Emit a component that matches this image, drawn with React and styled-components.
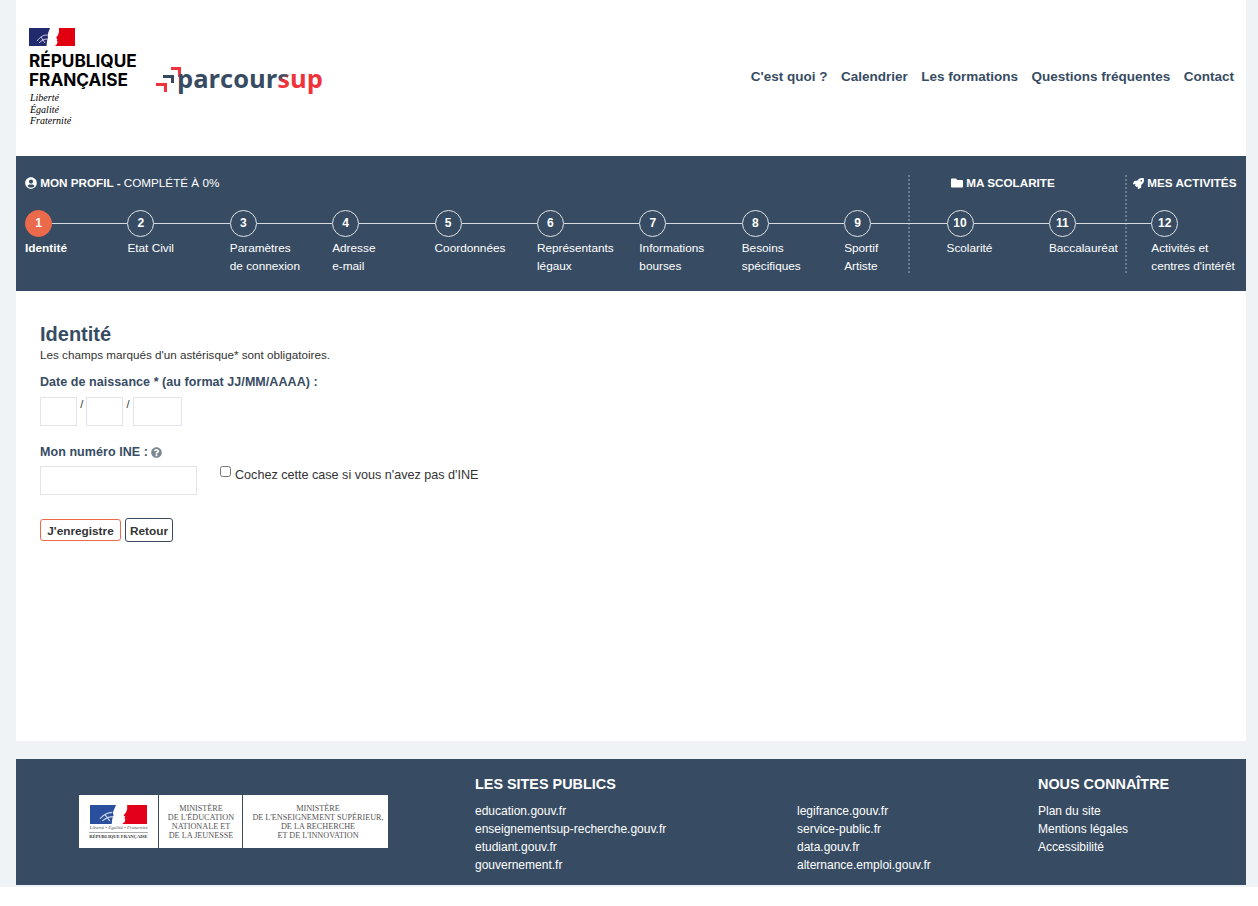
import styled, { createGlobalStyle } from 'styled-components'
import { FaUserCircle, FaFolder, FaRocket, FaQuestionCircle } from 'react-icons/fa'

const navy = '#374c62'
const coral = '#ec6a4c'

const GlobalStyle = createGlobalStyle`
  html, body {
    margin: 0;
    background: #fff;
  }
  body {
    font-family: "Liberation Sans", Arial, sans-serif;
    color: #333;
  }
`

const steps = [
  ['Identité'],
  ['Etat Civil'],
  ['Paramètres', 'de connexion'],
  ['Adresse', 'e-mail'],
  ['Coordonnées'],
  ['Représentants', 'légaux'],
  ['Informations', 'bourses'],
  ['Besoins', 'spécifiques'],
  ['Sportif', 'Artiste'],
  ['Scolarité'],
  ['Baccalauréat'],
  ['Activités et', "centres d'intérêt"],
]

const navLinks = ["C'est quoi ?", 'Calendrier', 'Les formations', 'Questions fréquentes', 'Contact']

const footerCols = [
  { title: 'LES SITES PUBLICS', width: 322, links: ['education.gouv.fr', 'enseignementsup-recherche.gouv.fr', 'etudiant.gouv.fr', 'gouvernement.fr'] },
  { title: '', width: 241, links: ['legifrance.gouv.fr', 'service-public.fr', 'data.gouv.fr', 'alternance.emploi.gouv.fr'] },
  { title: 'NOUS CONNAÎTRE', width: 208, links: ['Plan du site', 'Mentions légales', 'Accessibilité'] },
]

const FranceFlag = ({ width, height, blue, red }) => (
  <svg width={width} height={height} viewBox="0 0 46 18" preserveAspectRatio="none">
    <rect width="46" height="18" fill="#fff" />
    <path d="M0 0h21l-1.5 4-1 3 .5 3-1 3-.5 5H0z" fill={blue} />
    <path d="M30 0h16v18H26l2-2 .5-2-.7-2 .7-1-1.5-1 2-3 1-3z" fill={red} />
    <path d="M8 13c3-4 6-6 10-6M10 15c3-3 5-4 9-4M12 9l4 6" fill="none" stroke="#fff" strokeWidth="1" opacity=".75" />
  </svg>
)

const ParcoursupArrows = () => (
  <svg width="25" height="25" viewBox="0 0 25 25">
    <path d="M15 0h10v10h-3V3h-7z" fill="#f0333b" />
    <path d="M7 8h11v8h-3v-5H7z" fill="#37495f" />
    <path d="M0 16h11v9H8v-6H0z" fill="#f0333b" />
  </svg>
)

const App = () => (
  <Page>
    <GlobalStyle />
    <Header>
      <Brand>
        <Marianne>
          <FranceFlag width={46} height={18} blue="#222a6e" red="#e1000f" />
          <RepublicName>RÉPUBLIQUE<br />FRANÇAISE</RepublicName>
          <Motto>Liberté<br />Égalité<br />Fraternité</Motto>
        </Marianne>
        <Parcoursup>
          <ParcoursupArrows />
          <span>parcour<HalfS>s</HalfS><em>up</em></span>
        </Parcoursup>
      </Brand>
      <Nav>
        {navLinks.map((link) => (
          <NavLink key={link}>{link}</NavLink>
        ))}
      </Nav>
    </Header>

    <Progress>
      <Divider $left={892} />
      <Divider $left={1109} />
      <Sections>
        <SectionTitle $width={926}>
          <FaUserCircle size={12} /> <b>MON PROFIL -</b> COMPLÉTÉ À 0%
        </SectionTitle>
        <SectionTitle $width={182}>
          <FaFolder size={12} /> <b>MA SCOLARITE</b>
        </SectionTitle>
        <SectionTitle>
          <FaRocket size={11} /> <b>MES ACTIVITÉS</b>
        </SectionTitle>
      </Sections>
      <Steps>
        {steps.map((lines, index) => (
          <Step key={lines[0]} $last={index === steps.length - 1}>
            <Circle $active={index === 0}>{index + 1}</Circle>
            <StepLabel $active={index === 0}>
              {lines.map((line) => (
                <div key={line}>{line}</div>
              ))}
            </StepLabel>
          </Step>
        ))}
      </Steps>
    </Progress>

    <Main>
      <Title>Identité</Title>
      <Hint>Les champs marqués d'un astérisque* sont obligatoires.</Hint>
      <Label>Date de naissance * (au format JJ/MM/AAAA) :</Label>
      <DateRow>
        <Field $width={37} />
        <Slash>/</Slash>
        <Field $width={37} />
        <Slash>/</Slash>
        <Field $width={49} />
      </DateRow>
      <InlineLabel>
        Mon numéro INE : <FaQuestionCircle size={11} color="#7d8790" />
      </InlineLabel>
      <IneRow>
        <Field $width={157} />
        <CheckLabel>
          <Check type="checkbox" />
          <span>Cochez cette case si vous n'avez pas d'INE</span>
        </CheckLabel>
      </IneRow>
      <Buttons>
        <Save>J'enregistre</Save>
        <Back>Retour</Back>
      </Buttons>
    </Main>

    <Footer>
      <MinistryLogo>
        <FlagCell>
          <FranceFlag width={57} height={19} blue="#2a4f9f" red="#e2001a" />
          <FlagMotto>Liberté • Égalité • Fraternité</FlagMotto>
          <FlagName>RÉPUBLIQUE FRANÇAISE</FlagName>
        </FlagCell>
        <MinistryCell $width={83} $inset={1}>
          MINISTÈRE<br />DE L'ÉDUCATION<br />NATIONALE ET<br />DE LA JEUNESSE
        </MinistryCell>
        <MinistryCell $width={145} $inset={5}>
          MINISTÈRE<br />DE L'ENSEIGNEMENT SUPÉRIEUR,<br />DE LA RECHERCHE<br />ET DE L'INNOVATION
        </MinistryCell>
      </MinistryLogo>
      <FooterCols>
        {footerCols.map((col) => (
          <FooterCol key={col.links[0]} $width={col.width}>
            <FooterTitle>{col.title}</FooterTitle>
            {col.links.map((link) => (
              <FooterLink key={link}>{link}</FooterLink>
            ))}
          </FooterCol>
        ))}
      </FooterCols>
    </Footer>
  </Page>
)

export default App

const Page = styled.div`
  width: 1230px;
  padding: 0 12px 2px 16px;
  background: #eff3f6;
`

const Header = styled.header`
  height: 156px;
  background: #fff;
  display: flex;
  align-items: flex-start;
  justify-content: space-between;
  padding: 28px 12px 0 13px;
  box-sizing: border-box;
`

const Brand = styled.div`
  display: flex;
  align-items: flex-start;
`

const Marianne = styled.div`
  width: 127px;
  color: #000;

  svg {
    display: block;
  }
`

const RepublicName = styled.div`
  margin-top: 5px;
  font-family: "Inter", "Liberation Sans", sans-serif;
  font-size: 17.2px;
  line-height: 19px;
  font-weight: 700;
  white-space: nowrap;
`

const Motto = styled.div`
  margin: 3px 0 0 1px;
  font-family: "Liberation Serif", serif;
  font-style: italic;
  font-size: 10px;
  line-height: 11.5px;
`

const Parcoursup = styled.div`
  display: flex;
  align-items: flex-start;
  margin-top: 39px;
  color: ${navy};
  font-family: "Open Sans", sans-serif;
  font-weight: 700;
  font-size: 25.5px;
  line-height: 25px;

  svg {
    flex: none;
    margin-right: -4px;
  }

  span {
    margin-top: -1px;
  }

  em {
    font-style: normal;
    color: #f0333b;
  }
`

const HalfS = styled.i`
  font-style: normal;
  color: transparent;
  background: linear-gradient(160deg, ${navy} 42%, #f0333b 58%);
  background-clip: text;
`

const Nav = styled.nav`
  display: flex;
  gap: 13.5px;
  margin-top: 41px;
`

const NavLink = styled.a`
  color: ${navy};
  font-size: 13.5px;
  line-height: 16px;
  font-weight: 700;
`

const Progress = styled.section`
  position: relative;
  height: 135px;
  background: ${navy};
  padding: 20px 0 0 9px;
  box-sizing: border-box;
  color: #fff;
`

const Divider = styled.div`
  position: absolute;
  top: 19px;
  left: ${(props) => props.$left}px;
  height: 98px;
  border-left: 2px dotted #6b7d91;
`

const Sections = styled.div`
  display: flex;
`

const SectionTitle = styled.div`
  width: ${(props) => (props.$width ? `${props.$width}px` : 'auto')};
  font-size: 11.7px;
  line-height: 14px;
  white-space: nowrap;

  svg {
    vertical-align: -2px;
  }

  b {
    font-weight: 700;
  }
`

const Steps = styled.ol`
  display: grid;
  grid-template-columns: repeat(12, 102.4px);
  list-style: none;
  margin: 20px 0 0;
  padding: 0;
`

const Step = styled.li`
  position: relative;

  &::after {
    content: '';
    display: ${(props) => (props.$last ? 'none' : 'block')};
    position: absolute;
    left: 27px;
    right: 0;
    top: 13px;
    height: 1px;
    background: #d6dbe1;
  }
`

const Circle = styled.div`
  width: 27px;
  height: 27px;
  box-sizing: border-box;
  border: 1px solid ${(props) => (props.$active ? coral : '#dfe3e8')};
  border-radius: 50%;
  background: ${(props) => (props.$active ? coral : 'transparent')};
  text-align: center;
  font-size: 12px;
  line-height: 25px;
  font-weight: 700;
`

const StepLabel = styled.div`
  margin-top: 2px;
  font-size: 11.8px;
  line-height: 18px;
  font-weight: ${(props) => (props.$active ? 700 : 400)};
  white-space: nowrap;
`

const Main = styled.main`
  height: 450px;
  box-sizing: border-box;
  background: #fff;
  padding: 32px 24px 0;
`

const Title = styled.h1`
  margin: 0;
  color: ${navy};
  font-size: 20px;
  line-height: 22px;
  font-weight: 700;
`

const Hint = styled.p`
  margin: 3px 0 0;
  color: #333;
  font-size: 11.7px;
  line-height: 14px;
`

const Label = styled.label`
  display: block;
  margin-top: 13px;
  color: ${navy};
  font-size: 12.5px;
  line-height: 14px;
  font-weight: 700;
  letter-spacing: 0.06px;
`

const InlineLabel = styled(Label)`
  margin-top: 19px;

  svg {
    vertical-align: -2px;
  }
`

const DateRow = styled.div`
  display: flex;
  margin-top: 8px;
`

const Field = styled.input`
  display: block;
  width: ${(props) => props.$width}px;
  height: 29px;
  box-sizing: border-box;
  border: 1px solid #e1e4ec;
  background: #fff;
  padding: 0;
`

const Slash = styled.span`
  width: 9.4px;
  text-align: center;
  font-size: 11px;
  line-height: 15px;
  color: #333;
`

const IneRow = styled.div`
  display: flex;
  align-items: flex-start;
  margin-top: 7px;
`

const CheckLabel = styled.label`
  display: flex;
  margin-left: 23px;
  color: #333;
  font-size: 12.6px;
  line-height: 16px;

  span {
    margin-top: 1px;
  }
`

const Check = styled.input`
  width: 11px;
  height: 11px;
  margin: 0 4px 0 0;
`

const Buttons = styled.div`
  display: flex;
  align-items: center;
  gap: 4px;
  margin-top: 23px;
`

const Save = styled.button`
  width: 81px;
  height: 22px;
  padding: 1px 0 0;
  background: #fff;
  border: 1px solid ${coral};
  border-radius: 3px;
  color: #333;
  font: 700 11.8px "Liberation Sans", sans-serif;
`

const Back = styled(Save)`
  width: 48px;
  height: 24px;
  border-color: ${navy};
`

const Footer = styled.footer`
  height: 126px;
  margin-top: 18px;
  background: ${navy};
  color: #fff;
  display: flex;
  align-items: flex-start;
  padding: 0 0 0 63px;
  box-sizing: border-box;
`

const MinistryLogo = styled.div`
  display: flex;
  gap: 1px;
  width: 309px;
  height: 53px;
  margin-top: 36px;
`

const FlagCell = styled.div`
  width: 79px;
  background: #fff;
  display: flex;
  flex-direction: column;
  align-items: center;
  padding-top: 10px;
  box-sizing: border-box;
`

const FlagMotto = styled.div`
  margin-top: 1px;
  color: #555;
  font: italic 5px/6px "Liberation Serif", serif;
  white-space: nowrap;
`

const FlagName = styled.div`
  margin-top: 1px;
  padding-top: 1px;
  border-top: 1px solid #aaa;
  color: #333;
  font: 700 4.6px/6px "Liberation Serif", serif;
  white-space: nowrap;
`

const MinistryCell = styled.div`
  width: ${(props) => props.$width}px;
  background: #fff;
  color: #555;
  font-family: "Liberation Serif", serif;
  font-size: 8.2px;
  line-height: 9px;
  text-align: center;
  padding: 9px 0 0 ${(props) => props.$inset}px;
  box-sizing: border-box;
  white-space: nowrap;
`

const FooterCols = styled.div`
  display: flex;
  margin-left: 87px;
  padding-top: 17px;
`

const FooterCol = styled.div`
  width: ${(props) => props.$width}px;
`

const FooterTitle = styled.div`
  height: 16px;
  margin-bottom: 10px;
  font-size: 14.4px;
  line-height: 16px;
  font-weight: 700;
`

const FooterLink = styled.a`
  display: block;
  font-size: 12px;
  line-height: 18px;
  white-space: nowrap;
`
